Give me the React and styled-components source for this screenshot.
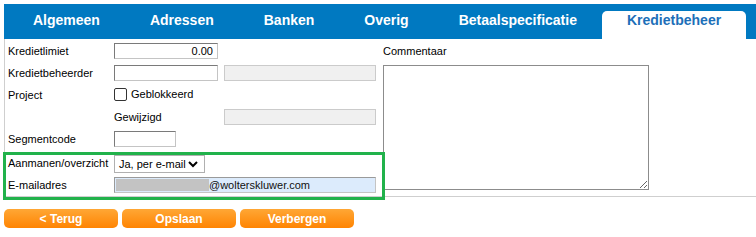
import React from 'react';
import styled, { createGlobalStyle } from 'styled-components';

const GlobalStyle = createGlobalStyle`
  body {
    margin: 0;
    background: #fff;
    font-family: "Liberation Sans", Arial, sans-serif;
    color: #000;
  }
`

const Page = styled.div`
  padding: 4px 0 0 4px;
`

const TabBar = styled.div`
  display: flex;
  box-sizing: border-box;
  height: 35px;
  padding: 7px 0 0 4px;
  background: #0079c1;
`

const Tab = styled.div`
  box-sizing: border-box;
  height: 28px;
  padding: 1px 25px 0;
  font-size: 14px;
  line-height: 16px;
  font-weight: bold;
  white-space: nowrap;
  color: ${p => p.active ? '#1d6fb8' : '#fff'};
  background: ${p => p.active ? '#fff' : 'transparent'};
  border-radius: 5px 5px 0 0;
`

const Panel = styled.div`
  display: flex;
  height: 157px;
  padding-top: 1px;
  box-sizing: border-box;
  border-left: 1px solid #cfcfcf;
  border-bottom: 1px solid #cfcfcf;
  height: 158px;
`

const LeftCol = styled.div`
  width: 376px;
  box-sizing: border-box;
  padding-left: 3px;
`

const Row = styled.div`
  display: flex;
  align-items: center;
  height: ${p => p.h}px;
  font-size: 11px;
`

const Label = styled.div`
  width: ${p => p.w || 106}px;
  flex: none;
`

const TextInput = styled.input`
  box-sizing: border-box;
  width: ${p => p.w}px;
  height: 16px;
  margin: 0;
  padding: 0 4px;
  font: 11px "Liberation Sans", Arial, sans-serif;
  text-align: ${p => p.right ? 'right' : 'left'};
  border: 1px solid;
  border-color: #7a7a7a #c4c4c4 #c4c4c4 #7a7a7a;
  background: #fff;
  outline: none;
`

const DisabledInput = styled.div`
  box-sizing: border-box;
  width: 152px;
  height: 16px;
  margin-left: ${p => p.ml || 0}px;
  border: 1px solid #cbcbcb;
  background: #f0f0f0;
`

const CheckBox = styled.span`
  box-sizing: border-box;
  width: 13px;
  height: 13px;
  border: 1px solid #333;
  border-radius: 2px;
  background: #fff;
  margin-right: 4px;
  margin-top: -2px;
`

const SelectWrap = styled.div`
  position: relative;
  box-sizing: border-box;
  width: 91px;
  height: 18px;
  border: 1px solid #b0b0b0;
  background: #fff;
  display: flex;
  align-items: center;
  padding-left: 4px;
  font-size: 11px;
  margin-top: 3px;

  svg {
    position: absolute;
    right: 6px;
    top: 4px;
  }
`

const EmailField = styled.div`
  box-sizing: border-box;
  display: flex;
  align-items: center;
  width: 262px;
  height: 16px;
  padding-left: 1px;
  border: 1px solid;
  border-color: #9a9a9a #c4c4c4 #c4c4c4 #9a9a9a;
  background: #dcebfc;
  font-size: 11px;
  color: #111;
`

const Redacted = styled.span`
  width: 93px;
  height: 12px;
  background: #c3c3c3;
`

const Highlight = styled.div`
  position: relative;

  &::after {
    content: "";
    position: absolute;
    left: -5px;
    right: -4px;
    top: 1px;
    bottom: -4px;
    border: 3px solid #21b24b;
    pointer-events: none;
  }
`

const RightCol = styled.div`
  padding-left: 2px;
  font-size: 11px;
`

const Note = styled.textarea`
  display: block;
  box-sizing: border-box;
  width: 266px;
  height: 125px;
  margin: 3px 0 0;
  border: 1px solid #8c8c8c;
  font: 11px "Liberation Sans", Arial, sans-serif;
  outline: none;
`

const ButtonBar = styled.div`
  display: flex;
  gap: 4px;
  margin-top: 12px;
`

const Button = styled.button`
  width: 114px;
  height: 19px;
  padding: 0;
  border: none;
  border-radius: 5px;
  background: linear-gradient(#ffa735, #ff8402);
  color: #fff;
  font: bold 12px "Liberation Sans", Arial, sans-serif;
  cursor: pointer;
`

const tabs = ['Algemeen', 'Adressen', 'Banken', 'Overig', 'Betaalspecificatie', 'Kredietbeheer'];

export default function App() {
  return (
    <Page>
      <GlobalStyle />
      <TabBar>
        {tabs.map(t => <Tab key={t} active={t === 'Kredietbeheer'}>{t}</Tab>)}
      </TabBar>
      <Panel>
        <LeftCol>
          <Row h={22}>
            <Label>Kredietlimiet</Label>
            <TextInput w={104} right defaultValue="0.00" />
          </Row>
          <Row h={22}>
            <Label>Kredietbeheerder</Label>
            <TextInput w={104} />
            <DisabledInput ml={6} />
          </Row>
          <Row h={22}>
            <Label>Project</Label>
            <CheckBox />
            <span style={{ marginTop: -3 }}>Geblokkeerd</span>
          </Row>
          <Row h={21}>
            <Label />
            <Label w={110}>Gewijzigd</Label>
            <DisabledInput />
          </Row>
          <Row h={24}>
            <Label>Segmentcode</Label>
            <TextInput w={62} />
          </Row>
          <Highlight>
            <Row h={23}>
              <Label>Aanmanen/overzicht</Label>
              <SelectWrap>
                Ja, per e-mail
                <svg width="10" height="8" viewBox="0 0 10 8">
                  <path d="M1 2 L5 6 L9 2" fill="none" stroke="#000" strokeWidth="2" />
                </svg>
              </SelectWrap>
            </Row>
            <Row h={22}>
              <Label>E-mailadres</Label>
              <EmailField>
                <Redacted />
                @wolterskluwer.com
              </EmailField>
            </Row>
          </Highlight>
        </LeftCol>
        <RightCol>
          <Row h={22}>Commentaar</Row>
          <Note />
        </RightCol>
      </Panel>
      <ButtonBar>
        <Button>&lt; Terug</Button>
        <Button>Opslaan</Button>
        <Button>Verbergen</Button>
      </ButtonBar>
    </Page>
  );
}
